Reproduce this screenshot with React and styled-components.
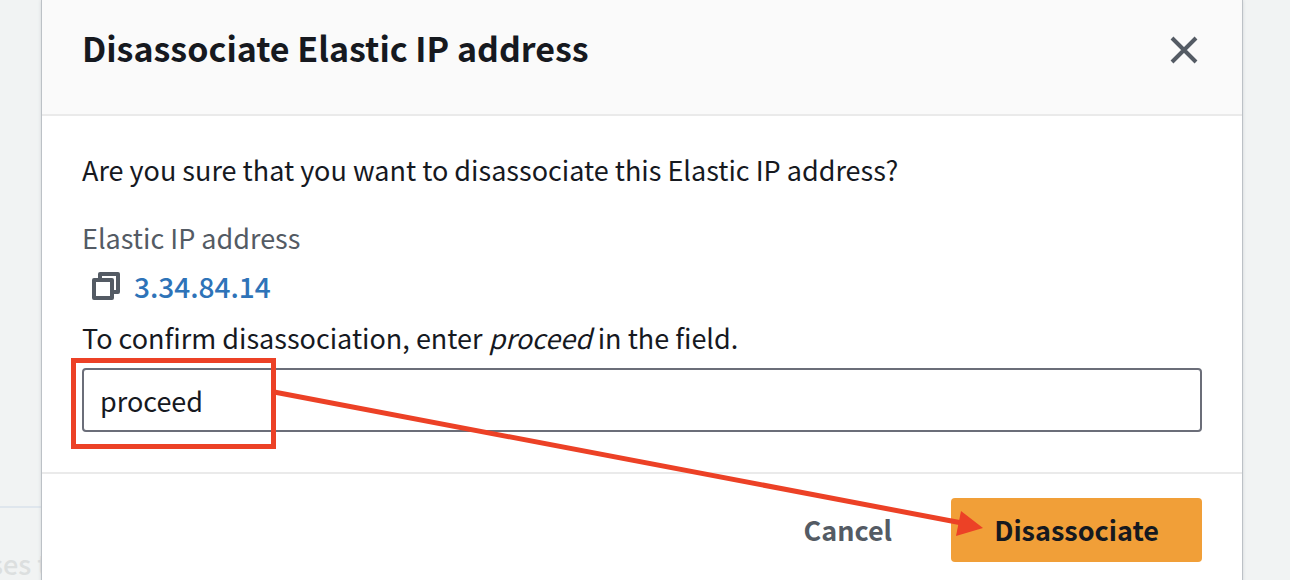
import React, { useState } from 'react';
import styled, { createGlobalStyle } from 'styled-components';

const GlobalStyle = createGlobalStyle`
  *, *::before, *::after { box-sizing: border-box; }
  body {
    margin: 0;
    background: #f1f3f3;
    color: #16191f;
    font-family: "Noto Sans CJK KR", "Noto Sans", sans-serif;
    font-size: 27px;
    line-height: 44px;
  }
  h2, p, dl, dd { margin: 0; }
`;

const Page = styled.div`
  position: relative;
  display: flex;
  min-height: 100vh;
  padding: 0 48px 0 42px;
  overflow: hidden;
`;

const Backdrop = styled.div`
  position: absolute;
  left: 0;
  bottom: 0;
  width: 48px;
  height: 80px;
  padding-top: 34px;
  border-top: 2px solid #dfe6ed;
  color: #dcdfdf;
  font-weight: 500;
  direction: rtl;
  white-space: nowrap;
`;

const Dialog = styled.section`
  position: relative;
  flex: 1;
  min-width: 0;
  background: #fff;
  box-shadow: 0 0 0 1px #bcc1c6, 0 0 4px #bcc1c6;
`;

const Header = styled.header`
  display: flex;
  align-items: flex-start;
  justify-content: space-between;
  padding: 24px 40px 38px;
  border-bottom: 2px solid #eaeaea;
  background: #fafafa;
`;

const Title = styled.h2`
  font-size: 34px;
  font-weight: 700;
  line-height: 48px;
`;

const CloseButton = styled.button`
  display: flex;
  padding: 10px 2px;
  border: 0;
  background: none;
  color: #545b64;
  cursor: pointer;
`;

const Body = styled.div`
  padding: 32px 40px 40px;
  border-bottom: 2px solid #eaeaea;
`;

const Details = styled.dl`
  margin: 24px 0 8px;
`;

const Term = styled.dt`
  color: #545b64;
`;

const Value = styled.dd`
  display: flex;
  align-items: center;
  gap: 14px;
  padding: 4px 0 0 10px;
`;

const CopyButton = styled.button`
  display: flex;
  padding: 0;
  border: 0;
  background: none;
  color: #545b64;
  cursor: pointer;
`;

const AddressLink = styled.a`
  color: #2e73b8;
  font-size: 28px;
  font-weight: 500;
  text-decoration: none;
`;

const ConfirmLabel = styled.label`
  display: block;
`;

const Field = styled.div`
  position: relative;
  margin-top: 8px;
`;

const TextInput = styled.input`
  display: block;
  width: 100%;
  height: 64px;
  padding: 0 16px;
  border: 2px solid #6b6e79;
  border-radius: 4px;
  background: #fff;
  color: inherit;
  font: inherit;
  outline: none;
`;

const Highlight = styled.div`
  position: absolute;
  top: -10px;
  left: -11px;
  width: 205px;
  height: 91px;
  border: 5px solid #ec4126;
  pointer-events: none;
`;

const Arrow = styled.svg`
  position: absolute;
  top: 380px;
  left: 228px;
  color: #ec4126;
  pointer-events: none;
`;

const Footer = styled.footer`
  display: flex;
  justify-content: flex-end;
  gap: 16px;
  padding: 24px 40px;
`;

const Button = styled.button`
  height: 64px;
  padding: 0 43px;
  border: 0;
  border-radius: 4px;
  background: ${(p) => (p.$primary ? '#f19f38' : 'transparent')};
  color: ${(p) => (p.$primary ? '#16191f' : '#545b64')};
  font: inherit;
  font-weight: 700;
  cursor: pointer;
`;

export default function App() {
  const [text, setText] = useState('proceed');
  return (
    <>
      <GlobalStyle />
      <Page>
        <Backdrop aria-hidden="true">ses t</Backdrop>
        <Dialog role="dialog" aria-labelledby="dialog-title">
          <Header>
            <Title id="dialog-title">Disassociate Elastic IP address</Title>
            <CloseButton type="button" aria-label="Close">
              <svg width="32" height="32" viewBox="0 0 32 32" fill="none" stroke="currentColor" strokeWidth="4">
                <path d="M4 4 28 28M28 4 4 28" />
              </svg>
            </CloseButton>
          </Header>
          <Body>
            <p>Are you sure that you want to disassociate this Elastic IP address?</p>
            <Details>
              <Term>Elastic IP address</Term>
              <Value>
                <CopyButton type="button" aria-label="Copy address">
                  <svg width="28" height="28" viewBox="0 0 28 28" fill="none" stroke="currentColor" strokeWidth="4" strokeLinejoin="round">
                    <path d="M2 8h18v18H2z" />
                    <path d="M8 8V2h18v18h-6" />
                  </svg>
                </CopyButton>
                <AddressLink href="#address">3.34.84.14</AddressLink>
              </Value>
            </Details>
            <ConfirmLabel htmlFor="confirm">
              To confirm disassociation, enter <em>proceed</em> in the field.
            </ConfirmLabel>
            <Field>
              <TextInput id="confirm" type="text" value={text} onChange={(e) => setText(e.target.value)} />
              <Highlight />
            </Field>
          </Body>
          <Footer>
            <Button type="button">Cancel</Button>
            <Button type="button" $primary>Disassociate</Button>
          </Footer>
          <Arrow width="720" height="160" viewBox="0 0 720 160" aria-hidden="true">
            <path d="M4 12 692 143" stroke="currentColor" strokeWidth="5" fill="none" />
            <path d="M691 131 713 148 686 156z" fill="currentColor" />
          </Arrow>
        </Dialog>
      </Page>
    </>
  );
}
